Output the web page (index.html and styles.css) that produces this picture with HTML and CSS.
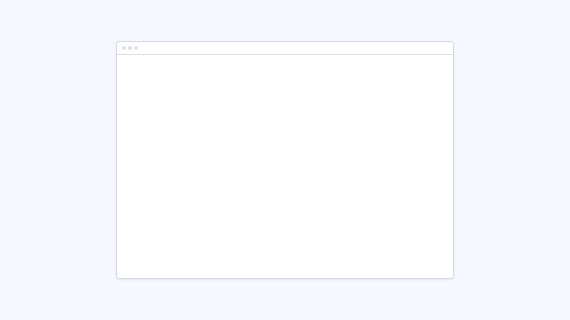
FILE: index.html
```html
<!DOCTYPE html>
<html>
<head>
<meta charset="utf-8">
<link rel="stylesheet" href="styles.css">
</head>
<body>
<div class="stage">
  <div class="window">
    <div class="titlebar">
      <span class="dot"></span><span class="dot"></span><span class="dot"></span>
    </div>
    <div class="content"></div>
  </div>
</div>
</body>
</html>
```
FILE: styles.css
```css
html, body {
  margin: 0;
  padding: 0;
  background: #f5f8fe;
  font-family: "Liberation Sans", Arial, sans-serif;
}
.stage {
  width: 570px;
  height: 320px;
  display: flex;
  align-items: center;
  justify-content: center;
}
.window {
  width: 338px;
  height: 238px;
  box-sizing: border-box;
  border: 1px solid #d8dae2;
  border-radius: 3px;
  background: #ffffff;
  display: flex;
  flex-direction: column;
  box-shadow: 0 1px 2px rgba(180, 185, 200, 0.25);
}
.titlebar {
  height: 13px;
  box-sizing: border-box;
  border-bottom: 1px solid #dcdee5;
  display: flex;
  align-items: center;
  gap: 2px;
  padding-left: 5px;
}
.dot {
  width: 4px;
  height: 4px;
  border-radius: 50%;
  background: #dcdfe7;
}
.content {
  flex: 1;
}
```
